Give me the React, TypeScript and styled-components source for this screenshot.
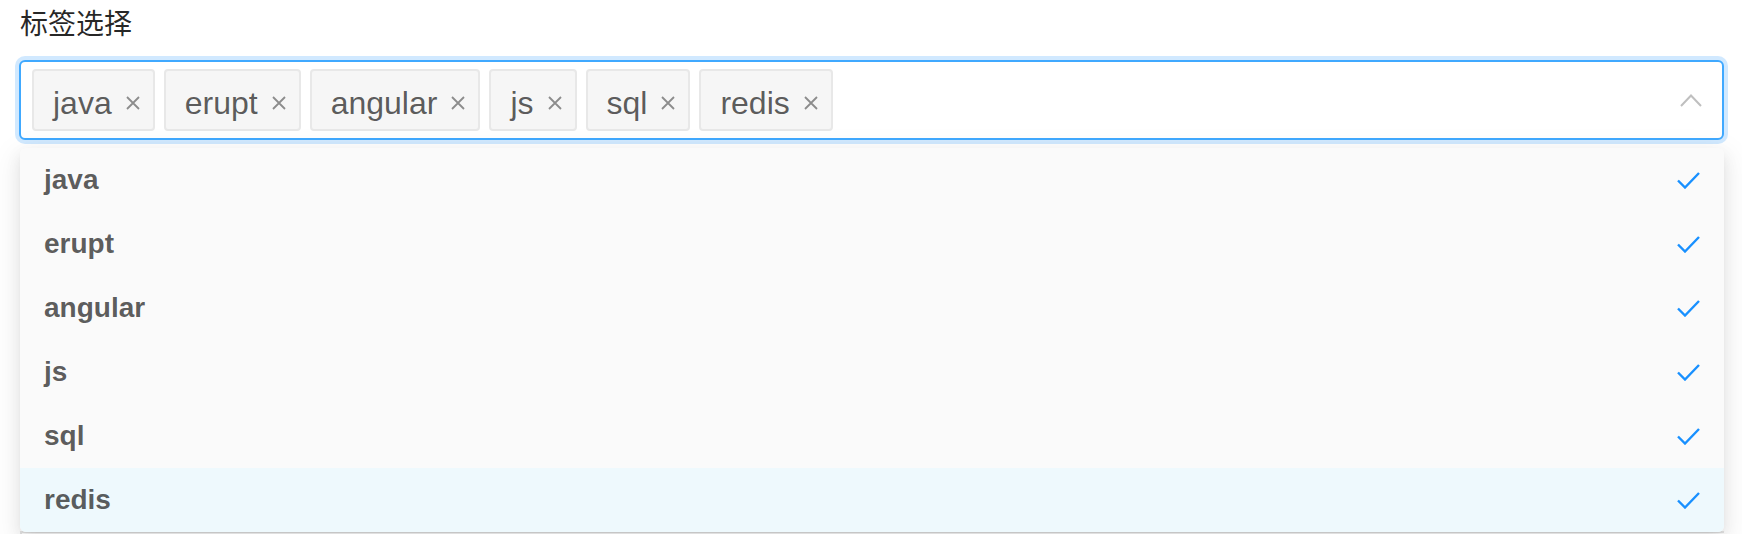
import React from "react";
import styled, { createGlobalStyle } from "styled-components";

const GlobalStyle = createGlobalStyle`
  html, body { margin: 0; padding: 0; background: #ffffff; }
  body { font-family: "Liberation Sans", "Noto Sans CJK SC", Arial, sans-serif; }
  * { box-sizing: border-box; }
`;

const Page = styled.div`
  padding: 0 18px 0 19px;
  display: flex;
  flex-direction: column;
`;

const Label = styled.div`
  font-family: "Noto Sans CJK SC", "Liberation Sans", sans-serif;
  font-size: 28px;
  line-height: 44px;
  height: 44px;
  color: rgba(0, 0, 0, 0.85);
  padding-left: 1px;
  margin-bottom: 16px;
`;

const SelectWrap = styled.div`
  position: relative;
`;

const Selector = styled.div`
  height: 80px;
  border: 2px solid #40a9ff;
  border-radius: 6px;
  box-shadow: 0 0 0 4px rgba(24, 144, 255, 0.2);
  background: #fff;
  display: flex;
  align-items: center;
  padding: 0 20px 0 11px;
`;

const TagList = styled.div`
  flex: 1;
  display: flex;
  align-items: center;
  gap: 9px;
`;

const Tag = styled.span`
  height: 62px;
  display: inline-flex;
  align-items: center;
  gap: 14px;
  padding: 6px 13px 0 19px;
  border: 2px solid #e8e8e8;
  border-radius: 4px;
  background: #f6f6f6;
  color: rgba(0, 0, 0, 0.65);
  font-size: 32px;
  line-height: 1;
`;

const TagText = styled.span`
  display: inline-block;
`;

const IconBox = styled.span<{ $w: number; $h: number }>`
  display: inline-flex;
  width: ${(p) => p.$w}px;
  height: ${(p) => p.$h}px;
  svg { display: block; }
`;

const Dropdown = styled.div`
  position: absolute;
  top: calc(100% + 8px);
  left: 1px;
  right: 0;
  background: #fafafa;
  border-radius: 6px;
  overflow: hidden;
  box-shadow: 0 6px 16px rgba(0, 0, 0, 0.08), 0 3px 6px -4px rgba(0, 0, 0, 0.12),
    0 9px 28px 8px rgba(0, 0, 0, 0.05);
  z-index: 10;
`;

const Option = styled.div<{ $active?: boolean }>`
  height: 64px;
  display: flex;
  align-items: center;
  justify-content: space-between;
  padding: 0 24px 0 24px;
  background: ${(p) => (p.$active ? "#eef9fd" : "#fafafa")};
  color: rgba(0, 0, 0, 0.65);
  font-size: 28px;
  font-weight: 700;
`;

const Beneath = styled.div`
  margin-top: 391px;
  margin-left: 1px;
  height: 3px;
  border-top: 2px solid #e6e6e6;
  border-left: 2px solid #e6e6e6;
`;

const Close = () => (
  <IconBox $w={14} $h={14}>
    <svg width="14" height="14" viewBox="0 0 14 14">
      <path d="M1 1 L13 13 M13 1 L1 13" stroke="#8c8c8c" strokeWidth="1.8" fill="none" />
    </svg>
  </IconBox>
);

const ArrowUp = () => (
  <IconBox $w={22} $h={13}>
    <svg width="22" height="13" viewBox="0 0 22 13">
      <polyline points="1,12 11,1.5 21,12" stroke="#bfbfbf" strokeWidth="2" fill="none" />
    </svg>
  </IconBox>
);

const Check = () => (
  <IconBox $w={23} $h={17}>
    <svg width="23" height="17" viewBox="0 0 23 17">
      <polyline points="1,8.5 8,15.5 22,1" stroke="#1890ff" strokeWidth="2.4" fill="none" />
    </svg>
  </IconBox>
);

const tags = ["java", "erupt", "angular", "js", "sql", "redis"];

export default function App() {
  return (
    <>
      <GlobalStyle />
      <Page>
        <Label>标签选择</Label>
        <SelectWrap>
          <Selector>
            <TagList>
              {tags.map((t) => (
                <Tag key={t}>
                  <TagText>{t}</TagText>
                  <Close />
                </Tag>
              ))}
            </TagList>
            <ArrowUp />
          </Selector>
          <Dropdown>
            {tags.map((t, i) => (
              <Option key={t} $active={i === tags.length - 1}>
                <span>{t}</span>
                <Check />
              </Option>
            ))}
          </Dropdown>
        </SelectWrap>
        <Beneath />
      </Page>
    </>
  );
}
